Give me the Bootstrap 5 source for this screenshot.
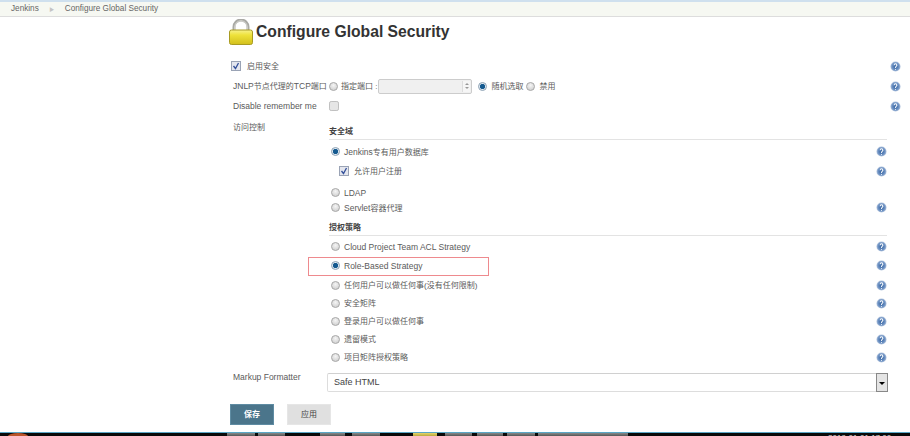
<!DOCTYPE html>
<html lang="zh"><head><meta charset="utf-8"><title>Configure Global Security</title>
<link href="https://cdn.jsdelivr.net/npm/bootstrap@5.3.0/dist/css/bootstrap.min.css" rel="stylesheet">
<style>
html,body{height:436px;overflow:hidden}
body{font-family:"Liberation Sans","Noto Sans CJK SC",sans-serif;font-size:8.5px;line-height:10px;color:#5a5a5a;background:#fff;display:flex;flex-direction:column;white-space:nowrap}
.cjk{font-size:8px}
.svgdefs{position:absolute;width:0;height:0}
.topedge{height:2px;background:#cfe0ee}
.crumbbar{height:15px;background:#f6f8f2;border-bottom:1px solid #ddd;padding-left:11px;font-size:8.2px;color:#666;gap:10.500px}
.crumbsep{font-size:5px;color:#c4c4c4}
.mainarea{flex:1;padding-left:229px;padding-right:9px;min-height:0}
.titlerow{height:27px;gap:3px;margin-top:1px;margin-bottom:13px}
.titlerow h1{font-size:15.7px;line-height:20px;font-weight:700;color:#333;margin:0}
.lbl{width:100px;flex:none;padding-left:4px}
.hlp{width:11px;height:11px;flex:none;margin-left:auto;display:block}
.h16{height:16px}.h18{height:18px}.h22{height:22px}.h24{height:24px}.h14{height:14px}
.gap-s1{margin-top:1px}.gap-s2{margin-top:2px}.gap-s5{margin-top:5px}
input.rd,input.rd:checked,input.rd:disabled{width:9px;height:9px;margin:0;flex:none;border:1px solid #aaa;opacity:1;background-color:#ddd;background-image:radial-gradient(circle at 50% 35%,#f5f5f5,#c9c9c9);box-shadow:none}
input.rd:checked{background-color:#e6eef5;background-image:radial-gradient(circle,#14598f 0 2.2px,#dfe8f0 3px);border-color:#8fa3b5}
input.ck,input.ck:checked{width:10px;height:10px;margin:0;flex:none;border:1px solid #9aa3b5;border-radius:0;background-color:#e4e6ee;box-shadow:none;opacity:1}
input.ck:checked{background-size:8px 8px;background-image:url("data:image/svg+xml,%3Csvg xmlns='http://www.w3.org/2000/svg' viewBox='0 0 8 8'%3E%3Cpath d='M1.500 4l2 2.500L6.500 1' stroke='%2333509a' stroke-width='1.300' fill='none'/%3E%3C/svg%3E")}
input.ck.dimbox{background-color:#e6e6e6;border-color:#c0c0c0}
input.ck.firstck{margin-left:2px}
.firstck-text{margin-left:6px;padding-top:2px}
input.ck.subck{margin-left:10px}
.subck-text{margin-left:5px;padding-top:2px}
.inner{margin-left:100px;margin-right:14px}
.accessline{padding-top:9px;height:9px}
.sec{height:17px;padding-top:4px;font-weight:700;color:#444;border-bottom:1px solid #e3e3e3}
.sec2{margin-top:5px}
.opt{padding-left:2px;gap:4px;position:relative}
.opt>span{padding-top:2px}
.redbox{position:absolute;left:-21px;top:1px;width:181px;height:19px;border:1px solid #ee8a8e;pointer-events:none}
.portwrap{width:94px;height:15px;position:relative;margin-left:1px;margin-right:6px}
.portin.form-control{width:100%;height:100%;padding:0 3px;min-height:0;border:1px solid #ccc;border-radius:2px;background:#f0f0f0}
.spinbox{position:absolute;right:2px;top:2px;bottom:2px;width:8px;border-left:1px solid #ddd;background:#f6f6f6;display:flex;flex-direction:column;align-items:center;justify-content:space-evenly}
.spinbox::before{content:"";border:2px solid transparent;border-bottom:2px solid #999;border-top:0}
.spinbox::after{content:"";border:2px solid transparent;border-top:2px solid #999;border-bottom:0}
.radtext{margin-left:3px;padding-top:2px}
.radtext2{margin-left:4px;margin-right:3px;padding-top:2px}
.mkline{margin-top:7px;height:19px}
.mklabel{width:98px;flex:none;padding-left:4px;line-height:8px}
.selwrap{position:relative;flex:1;margin-right:13px}
.picker.form-select{height:19px;min-height:0;padding:0 0 0 6px;border:1px solid #ddd;border-top-color:#d0d0d0;border-radius:2px;font-size:9px;line-height:17px;color:#444;background-image:none;box-shadow:none}
.selarrow{position:absolute;right:0;top:0;bottom:0;width:12px;background:#e4e4e4;border:1px solid #888;display:flex;align-items:center;justify-content:center}
.selarrow::after{content:"";border:3px solid transparent;border-top:3px solid #000;border-bottom:0;margin-top:2px}
.btnrow{margin-top:12px;margin-left:1px;gap:13px}
.btn.savebtn,.btn.applybtn{width:44px;height:21px;padding:0;font-size:8px;line-height:19px;border-radius:0}
.btn.savebtn{background:#4b758b;border:1px solid #5f8ca3;color:#fff;font-weight:700}
.btn.applybtn{background:#e0e0e0;border:1px solid #e6e6e6;color:#444}
.taskbar{height:4px;background:#0a0a0a;border-top:1px solid #5aa7c7;display:flex;position:relative;overflow:hidden}
.tbitem{position:absolute;top:0;bottom:0;background:linear-gradient(#8a8a8a,#555)}
.tborb{position:absolute;left:8px;top:0;width:20px;height:6px;border-radius:50% 50% 0 0;background:#b9552c}
.tbgray1{left:227px;width:28px}.tbgray2{left:258px;width:27px}.tbgray3{left:320px;width:25px}.tbgray4{left:352px;width:28px}
.tbyellow{left:413px;width:24px;background:linear-gradient(#e6d56a,#b9a83e)}
.tbgray5{left:445px;width:27px}.tbgray6{left:477px;width:26px}.tbgray7{left:507px;width:28px}.tbgray8{left:538px;width:90px}
.tbclock{position:absolute;left:828px;top:1px;color:#ddd;font-size:8px;line-height:8px}
</style></head><body>
<svg class="svgdefs" aria-hidden="true"><defs>
<radialGradient id="hg"><stop offset="0" stop-color="#2f5f9e"/><stop offset=".7" stop-color="#6f93c4"/><stop offset="1" stop-color="#b5c6de"/></radialGradient>
<linearGradient id="lockbody" x1="0" y1="0" x2="0" y2="1"><stop offset="0" stop-color="#f7f18c"/><stop offset=".35" stop-color="#eee23a"/><stop offset="1" stop-color="#d2bf1c"/></linearGradient>
<symbol id="hp" viewBox="0 0 12 12"><circle cx="6" cy="6" r="5.500" fill="url(#hg)"/><path d="M4.500 4.500c0-2 3-2 3 0 0 1.200-1.500 1.200-1.500 3M6 8.600v1" stroke="#fff" stroke-width="1.100" fill="none"/></symbol>
</defs></svg>
<div class="topedge"></div>
<nav class="crumbbar d-flex align-items-center"><span>Jenkins</span><span class="crumbsep">&#9654;</span><span>Configure Global Security</span></nav>
<main class="mainarea d-flex flex-column">
<div class="titlerow d-flex align-items-center">
<svg width="24" height="26" viewBox="0 0 24 26"><path d="M5 12V8a7 7 0 0 1 14 0v4" fill="none" stroke="#a9a9a4" stroke-width="3"/><path d="M5.800 12V8a6.200 6.200 0 0 1 12.400 0v4" fill="none" stroke="#dcdcd8" stroke-width="1"/><rect x=".5" y="11" width="23" height="14.500" rx="2" fill="url(#lockbody)" stroke="#a89b22"/></svg>
<h1>Configure Global Security</h1></div>

<div class="d-flex align-items-center h16"><input class="form-check-input ck firstck" type="checkbox" checked aria-label="启用安全"><span class="firstck-text cjk">启用安全</span><svg class="hlp"><use href="#hp"/></svg></div>

<div class="d-flex align-items-center h24"><span class="lbl">JNLP<span class="cjk">节点代理的</span>TCP<span class="cjk">端口</span></span><input class="form-check-input rd" type="radio" name="port" aria-label="指定端口"><span class="radtext cjk">指定端口 :</span><span class="portwrap"><input class="form-control portin" type="text" disabled aria-label="端口"><span class="spinbox"></span></span><input class="form-check-input rd" type="radio" name="port" checked aria-label="随机选取"><span class="radtext2 cjk">随机选取</span><input class="form-check-input rd" type="radio" name="port" aria-label="禁用"><span class="radtext2 cjk">禁用</span><svg class="hlp"><use href="#hp"/></svg></div>

<div class="d-flex align-items-center h16"><span class="lbl">Disable remember me</span><input class="form-check-input ck dimbox" type="checkbox" aria-label="Disable remember me"><svg class="hlp"><use href="#hp"/></svg></div>

<div class="lbl accessline cjk">访问控制</div>
<div class="inner d-flex flex-column">
<div class="sec cjk">安全域</div>
<div class="opt d-flex align-items-center h22"><input class="form-check-input rd" type="radio" name="realm" checked aria-label="Jenkins专有用户数据库"><span>Jenkins<span class="cjk">专有用户数据库</span></span><svg class="hlp"><use href="#hp"/></svg></div>
<div class="d-flex align-items-center h18"><input class="form-check-input ck subck" type="checkbox" checked aria-label="允许用户注册"><span class="subck-text cjk">允许用户注册</span><svg class="hlp"><use href="#hp"/></svg></div>
<div class="opt d-flex align-items-center h14 gap-s5"><input class="form-check-input rd" type="radio" name="realm" aria-label="LDAP"><span>LDAP</span></div>
<div class="opt d-flex align-items-center h14 gap-s1"><input class="form-check-input rd" type="radio" name="realm" aria-label="Servlet容器代理"><span>Servlet<span class="cjk">容器代理</span></span><svg class="hlp"><use href="#hp"/></svg></div>
<div class="sec sec2 cjk">授权策略</div>
<div class="opt d-flex align-items-center h18 gap-s1"><input class="form-check-input rd" type="radio" name="authz" aria-label="Cloud Project Team ACL Strategy"><span>Cloud Project Team ACL Strategy</span><svg class="hlp"><use href="#hp"/></svg></div>
<div class="opt d-flex align-items-center h18 gap-s1"><input class="form-check-input rd" type="radio" name="authz" checked aria-label="Role-Based Strategy"><span>Role-Based Strategy</span><svg class="hlp"><use href="#hp"/></svg><span class="redbox"></span></div>
<div class="opt d-flex align-items-center h18 gap-s2"><input class="form-check-input rd" type="radio" name="authz" aria-label="任何用户可以做任何事"><span class="cjk">任何用户可以做任何事(没有任何限制)</span><svg class="hlp"><use href="#hp"/></svg></div>
<div class="opt d-flex align-items-center h18"><input class="form-check-input rd" type="radio" name="authz" aria-label="安全矩阵"><span class="cjk">安全矩阵</span><svg class="hlp"><use href="#hp"/></svg></div>
<div class="opt d-flex align-items-center h18"><input class="form-check-input rd" type="radio" name="authz" aria-label="登录用户可以做任何事"><span class="cjk">登录用户可以做任何事</span><svg class="hlp"><use href="#hp"/></svg></div>
<div class="opt d-flex align-items-center h18"><input class="form-check-input rd" type="radio" name="authz" aria-label="遗留模式"><span class="cjk">遗留模式</span><svg class="hlp"><use href="#hp"/></svg></div>
<div class="opt d-flex align-items-center h18"><input class="form-check-input rd" type="radio" name="authz" aria-label="项目矩阵授权策略"><span class="cjk">项目矩阵授权策略</span><svg class="hlp"><use href="#hp"/></svg></div>
</div>

<div class="d-flex mkline"><span class="mklabel">Markup Formatter</span><div class="selwrap"><select class="form-select picker" aria-label="Markup Formatter"><option>Safe HTML</option></select><span class="selarrow"></span></div></div>

<div class="d-flex btnrow"><button class="btn savebtn" type="button">保存</button><button class="btn applybtn" type="button">应用</button></div>
</main>
<div class="taskbar"><span class="tborb"></span><span class="tbitem tbgray1"></span><span class="tbitem tbgray2"></span><span class="tbitem tbgray3"></span><span class="tbitem tbgray4"></span><span class="tbitem tbyellow"></span><span class="tbitem tbgray5"></span><span class="tbitem tbgray6"></span><span class="tbitem tbgray7"></span><span class="tbitem tbgray8"></span><span class="tbclock">2018-01-01 17:00</span></div>
</body></html>
